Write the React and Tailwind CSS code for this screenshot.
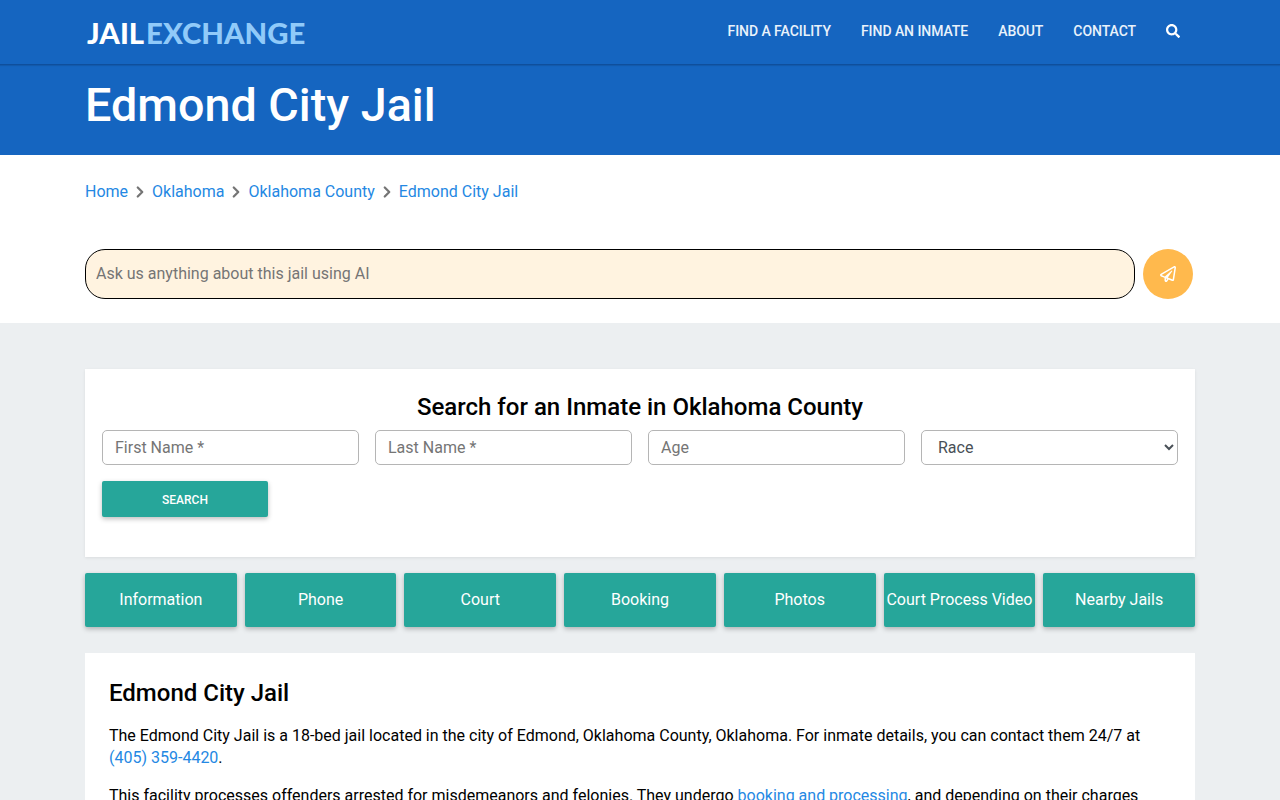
import React from 'react';
import { FaSearch, FaRegPaperPlane } from 'react-icons/fa';
import { ChevronRight } from 'lucide-react';

const navLinks = ['FIND A FACILITY', 'FIND AN INMATE', 'ABOUT', 'CONTACT'];
const crumbs = ['Home', 'Oklahoma', 'Oklahoma County', 'Edmond City Jail'];
const tabs = ['Information', 'Phone', 'Court', 'Booking', 'Photos', 'Court Process Video', 'Nearby Jails'];

const fieldClass =
  'w-full h-[35px] border border-[#b5b5b5] rounded-[5px] bg-white px-3 text-base text-[#495057] placeholder:text-[#757575] outline-none';

const App = () => {
  return (
    <div className="min-h-screen bg-[#eceff1] font-['Roboto',sans-serif] text-base text-black">
      {/* Nav */}
      <header className="bg-[#1565c0] text-white">
        <div className="h-[65px] border-b border-[#0f4f9c] shadow-[0_1px_1px_rgba(0,0,0,0.1)]">
          <div className="w-[1110px] mx-auto h-full flex items-center justify-between">
            <a className="font-['Lato',sans-serif] font-black text-[29.3px] leading-none pl-[2px] pt-[2px] flex">
              <span className="text-white">JAIL</span>
              <span className="text-[#90caf9] ml-[2px]">EXCHANGE</span>
            </a>
            <nav className="flex items-center gap-[30px] pr-[15px] pb-[3px] text-sm font-medium tracking-[-0.06px] text-[#e9f2fb]">
              {navLinks.map((link) => (
                <a key={link}>{link}</a>
              ))}
              <FaSearch className="w-[14px] h-[14px] text-white" />
            </nav>
          </div>
        </div>
        <div className="h-[90px]">
          <h1 className="w-[1110px] mx-auto text-[46.7px] leading-[80px] font-medium">Edmond City Jail</h1>
        </div>
      </header>

      {/* Breadcrumb + AI */}
      <section className="bg-white h-[168px]">
        <div className="w-[1110px] mx-auto pt-[26px]">
          <div className="flex items-center h-[22px] text-[#2488e3]">
            {crumbs.map((c, i) => (
              <React.Fragment key={c}>
                {i > 0 && <ChevronRight className="w-[18px] h-[18px] mx-[3px] text-[#757575]" strokeWidth={3} />}
                <a>{c}</a>
              </React.Fragment>
            ))}
          </div>
          <div className="flex items-center gap-2 mt-[46px]">
            <input
              className="w-[1050px] h-[50px] rounded-[20px] border border-black bg-[#fff3e0] px-[10px] pb-[2px] text-base placeholder:text-[#757575] outline-none"
              placeholder="Ask us anything about this jail using AI"
            />
            <button className="w-[50px] h-[50px] rounded-full bg-[#ffb94d] flex items-center justify-center text-white">
              <FaRegPaperPlane className="w-[16px] h-[16px]" />
            </button>
          </div>
        </div>
      </section>

      <main className="w-[1110px] mx-auto pt-[46px]">
        {/* Inmate search */}
        <div className="bg-white h-[188px] px-[17px] pt-[23px] shadow-[0_1px_3px_rgba(0,0,0,0.08)]">
          <h2 className="text-2xl leading-[30px] font-medium text-center">Search for an Inmate in Oklahoma County</h2>
          <div className="grid grid-cols-4 gap-4 mt-2">
            <input className={fieldClass} placeholder="First Name *" />
            <input className={fieldClass} placeholder="Last Name *" />
            <input className={fieldClass} placeholder="Age" />
            <select className={fieldClass}>
              <option>Race</option>
            </select>
          </div>
          <button className="w-[166px] h-[36px] mt-4 pt-[1px] rounded-[2px] bg-[#26a69a] text-white text-xs font-medium shadow-[0_2px_5px_rgba(0,0,0,0.26)]">
            SEARCH
          </button>
        </div>

        {/* Tabs */}
        <div className="grid grid-cols-7 gap-2 mt-4">
          {tabs.map((t) => (
            <a
              key={t}
              className="h-[54px] flex items-center justify-center rounded-[2px] bg-[#26a69a] text-white whitespace-nowrap shadow-[0_2px_5px_rgba(0,0,0,0.26)]"
            >
              {t}
            </a>
          ))}
        </div>

        {/* Article */}
        <article className="bg-white mt-[26px] px-6 pt-[25px] pb-6 leading-[22px]">
          <h2 className="text-2xl leading-[30px] font-medium mb-[17px]">Edmond City Jail</h2>
          <p className="mb-4">
            The Edmond City Jail is a 18-bed jail located in the city of Edmond, Oklahoma County, Oklahoma. For inmate
            details, you can contact them 24/7 at <a className="text-[#2488e3]">(405) 359-4420</a>.
          </p>
          <p>
            This facility processes offenders arrested for misdemeanors and felonies. They undergo{' '}
            <a className="text-[#2488e3]">booking and processing</a>, and depending on their charges
          </p>
        </article>
      </main>
    </div>
  );
};

export default App;
